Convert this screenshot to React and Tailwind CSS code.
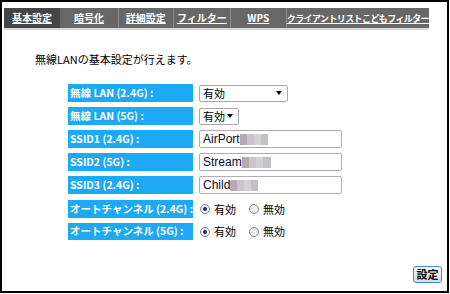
import React from "react";

const tabs = [
  { label: "基本設定", w: "w-[56px]", active: true },
  { label: "暗号化", w: "w-[58px]" },
  { label: "詳細設定", w: "w-[55px]" },
  { label: "フィルター", w: "w-[57px]" },
  { label: "WPS", w: "w-[56px]" },
  { label: "クライアントリストこどもフィルター", w: "flex-1", tight: true },
];

const Label = ({ children }) => (
  <div className="w-[125px] h-full bg-[#1ea9f5] text-white font-bold text-[10.5px] leading-none flex items-center pl-[2px] whitespace-nowrap">
    {children}
  </div>
);

const Blur = ({ w }) => (
  <span className={`inline-flex h-[11px] ${w}`}>
    <span className="flex-1 bg-[#b3aab3]" />
    <span className="flex-1 bg-[#cbc5cb]" />
    <span className="flex-1 bg-[#d4d0d6]" />
    <span className="flex-1 bg-[#c4c1c6]" />
  </span>
);

const Select = ({ w }) => (
  <div className={`${w} h-[17px] border border-[#a9a9a9] rounded-[2px] bg-white flex items-center justify-between pl-[3px] pr-[5px] text-[11px] leading-none text-black whitespace-nowrap`}>
    <span>有効</span>
    <span className="w-0 h-0 border-l-[3px] border-r-[3px] border-t-[4px] border-l-transparent border-r-transparent border-t-black" />
  </div>
);

const TextBox = ({ text, blur }) => (
  <div className="w-[143px] h-[18px] border border-[#aeaeae] rounded-[2px] bg-white flex items-center pl-[3px] text-[12px] text-[#0a0a28] leading-none" style={{ fontFamily: "Arial, 'Liberation Sans', sans-serif" }}>
    <span>{text}</span>
    <Blur w={blur} />
  </div>
);

const Radio = ({ on, label }) => (
  <div className="flex items-center gap-[4px] text-[11px] leading-none text-black">
    <span className="w-[10px] h-[10px] rounded-full border border-[#888] bg-[#f0f0f0] flex items-center justify-center">
      {on && <span className="w-[4px] h-[4px] rounded-full bg-[#1a2a6a]" />}
    </span>
    <span>{label}</span>
  </div>
);

export default function App() {
  return (
    <div
      className="w-[449px] h-[293px] border-2 border-black bg-white relative"
      style={{ fontFamily: "'Noto Sans CJK JP', 'Liberation Sans', sans-serif" }}
    >
      <div className="mt-[6px] ml-[2px] w-[425px] h-[20px] bg-[#676767] flex border-b-[2px] border-[#dadada] box-content">
        {tabs.map((t, i) => (
          <div
            key={t.label}
            className={`${t.w} h-full flex items-center justify-center leading-none font-bold text-white underline whitespace-nowrap ${t.tight ? "text-[9px] tracking-[-0.6px]" : "text-[10px]"} ${t.active ? "bg-[#454545]" : ""} ${i > 0 && !tabs[i - 1].active ? "border-l border-[#8a8a8a]" : ""}`}
          >
            {t.label}
          </div>
        ))}
      </div>

      <div className="ml-[33px] mt-[24px] text-[11px] leading-none text-black">無線LANの基本設定が行えます。</div>

      <div className="ml-[66px] mt-[19px] flex flex-col gap-[5px]">
        <div className="h-[18px] flex items-center gap-[6px]">
          <Label>無線 LAN (2.4G) :</Label>
          <Select w="w-[89px]" />
        </div>
        <div className="h-[18px] flex items-center gap-[6px]">
          <Label>無線 LAN (5G) :</Label>
          <Select w="w-[40px]" />
        </div>
        <div className="h-[18px] flex items-center gap-[6px]">
          <Label>SSID1 (2.4G) :</Label>
          <TextBox text="AirPort" blur="w-[28px]" />
        </div>
        <div className="h-[18px] flex items-center gap-[6px]">
          <Label>SSID2 (5G) :</Label>
          <TextBox text="Stream" blur="w-[29px]" />
        </div>
        <div className="h-[18px] flex items-center gap-[6px]">
          <Label>SSID3 (2.4G) :</Label>
          <TextBox text="Child" blur="w-[28px]" />
        </div>
        <div className="h-[18px] mt-[1px] flex items-center gap-[6px]">
          <Label>オートチャンネル (2.4G) :</Label>
          <div className="flex items-center gap-[13px] ml-[1px]">
            <Radio on label="有効" />
            <Radio label="無効" />
          </div>
        </div>
        <div className="h-[17px] flex items-center gap-[6px]">
          <Label>オートチャンネル (5G) :</Label>
          <div className="flex items-center gap-[13px] ml-[1px]">
            <Radio on label="有効" />
            <Radio label="無効" />
          </div>
        </div>
      </div>

      <div className="absolute right-[5px] bottom-[8px] w-[29px] h-[17px] border border-[#3c8ad8] rounded-[3px] bg-gradient-to-b from-[#f6f6f6] to-[#dcdcdc] flex items-center justify-center text-[11px] leading-none font-bold text-black">
        設定
      </div>
    </div>
  );
}
